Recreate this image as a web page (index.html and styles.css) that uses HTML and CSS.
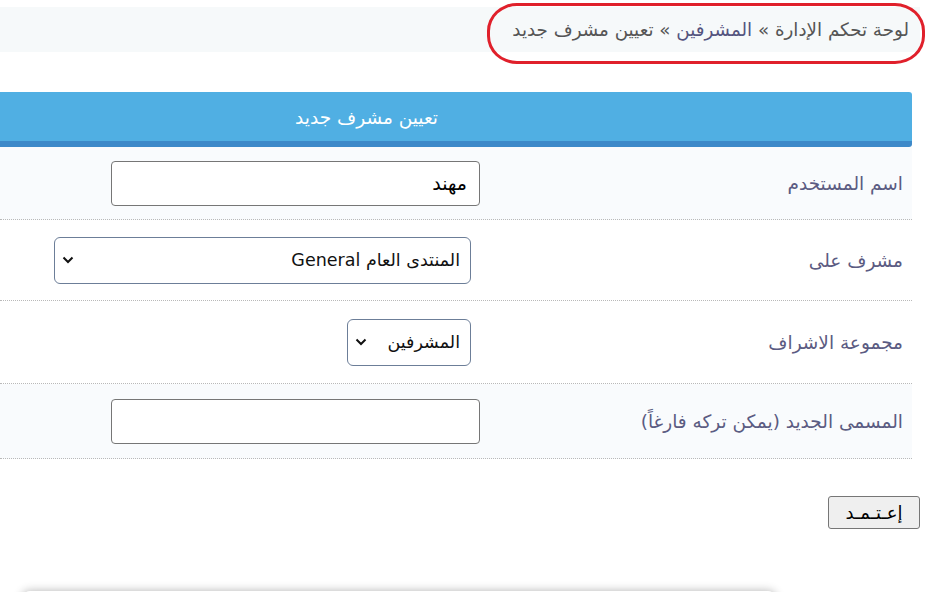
FILE: index.html
```html
<!DOCTYPE html>
<html lang="ar" dir="rtl">
<head>
<meta charset="utf-8">
<title>تعيين مشرف جديد</title>
<link rel="stylesheet" href="styles.css">
</head>
<body>
<div class="page">
  <div class="crumbs">
    <span class="crumb-first">لوحة تحكم الإدارة</span> » <a class="crumb-link">المشرفين</a> » <span>تعيين مشرف جديد</span>
  </div>
  <div class="mark"></div>

  <div class="panel">
    <div class="panel-head"><span class="panel-title">تعيين مشرف جديد</span></div>
    <div class="row row-a shade">
      <div class="label">اسم المستخدم</div>
      <div class="field"><div class="input input-wide">مهند</div></div>
    </div>
    <div class="row row-b">
      <div class="label">مشرف على</div>
      <div class="field"><div class="select select-wide"><span>المنتدى العام General</span><svg class="chev" viewBox="0 0 12 8" width="12" height="8"><path d="M1.5 1.5l4.5 4.5 4.5-4.5" fill="none" stroke="#111" stroke-width="2"/></svg></div></div>
    </div>
    <div class="row row-c">
      <div class="label">مجموعة الاشراف</div>
      <div class="field"><div class="select select-narrow"><span>المشرفين</span><svg class="chev" viewBox="0 0 12 8" width="12" height="8"><path d="M1.5 1.5l4.5 4.5 4.5-4.5" fill="none" stroke="#111" stroke-width="2"/></svg></div></div>
    </div>
    <div class="row row-d shade">
      <div class="label">المسمى الجديد (يمكن تركه فارغاً)</div>
      <div class="field"><div class="input input-wide"></div></div>
    </div>
  </div>

  <div class="actions"><button class="btn">إعـتـمـد</button></div>
  <div class="footer-card"></div>
</div>
</body>
</html>
```

FILE: styles.css
```css
html, body {
  margin: 0;
  padding: 0;
  background: #fff;
  overflow: hidden;
}
body {
  font-family: "DejaVu Sans", sans-serif;
  width: 941px;
  height: 592px;
}
.page {
  position: relative;
  width: 941px;
  height: 592px;
  direction: rtl;
  overflow: hidden;
}
.crumbs {
  margin-top: 7px;
  margin-right: 21px;
  width: 920px;
  height: 45px;
  background: #f6f9fa;
  line-height: 45px;
  font-size: 18.3px;
  color: #555;
  text-align: right;
  white-space: nowrap;
}
.crumb-first { margin-right: 11px; }
.crumb-link { color: #54547e; }
.mark {
  position: absolute;
  right: 16px;
  top: 3px;
  width: 432px;
  height: 55px;
  border: 3px solid #e0202b;
  border-radius: 30px / 28px;
}
.panel {
  margin-top: 40px;
  margin-right: 29px;
  width: 912px;
}
.panel-head {
  height: 49px;
  background: #50afe3;
  border-bottom: 6px solid #3d89c9;
  border-top-right-radius: 3px;
  border-bottom-right-radius: 3px;
  display: flex;
  align-items: center;
}
.panel-title {
  color: #fff;
  font-size: 18.5px;
  margin-right: 474px;
  padding-top: 1px;
  letter-spacing: -0.3px;
}
.row {
  display: flex;
  align-items: center;
  border-bottom: 1px dotted #b9b9b9;
  box-sizing: border-box;
}
.shade { background: #f9fbfd; }
.row-a { height: 73px; }
.row-b { height: 81px; }
.row-c { height: 83px; }
.row-d { height: 75px; }
.label {
  width: 423px;
  padding-right: 9px;
  font-size: 18.5px;
  color: #5b5b82;
  text-align: right;
  white-space: nowrap;
}
.field {
  flex: 1;
  display: flex;
}
.input {
  height: 45px;
  box-sizing: border-box;
  border: 1px solid #767676;
  border-radius: 4px;
  background: #fff;
  padding: 0 12px;
  font-size: 19px;
  line-height: 43px;
  color: #000;
}
.input-wide { width: 369px; }
.select {
  height: 47px;
  box-sizing: border-box;
  border: 1px solid #6c7e98;
  border-radius: 6px;
  background: #fff;
  margin-right: 9px;
  padding: 0 10px 0 7px;
  display: flex;
  align-items: center;
  justify-content: space-between;
  font-size: 17.5px;
  color: #111;
  white-space: nowrap;
}
.select-wide { width: 417px; }
.select-narrow { width: 124px; }
.chev { flex: none; }
.actions {
  width: 920px;
  margin-right: 21px;
  margin-top: 37px;
  display: flex;
}
.btn {
  font-family: "DejaVu Sans", sans-serif;
  font-size: 18px;
  width: 92px;
  height: 33px;
  background: #efefef;
  border: 1px solid #767676;
  border-radius: 3px;
  color: #000;
  padding: 0;
}
.footer-card {
  position: absolute;
  left: 22px;
  top: 591px;
  width: 754px;
  height: 40px;
  background: #fff;
  box-shadow: 0 0 10px rgba(0,0,0,0.3);
  border-radius: 8px;
}
```
